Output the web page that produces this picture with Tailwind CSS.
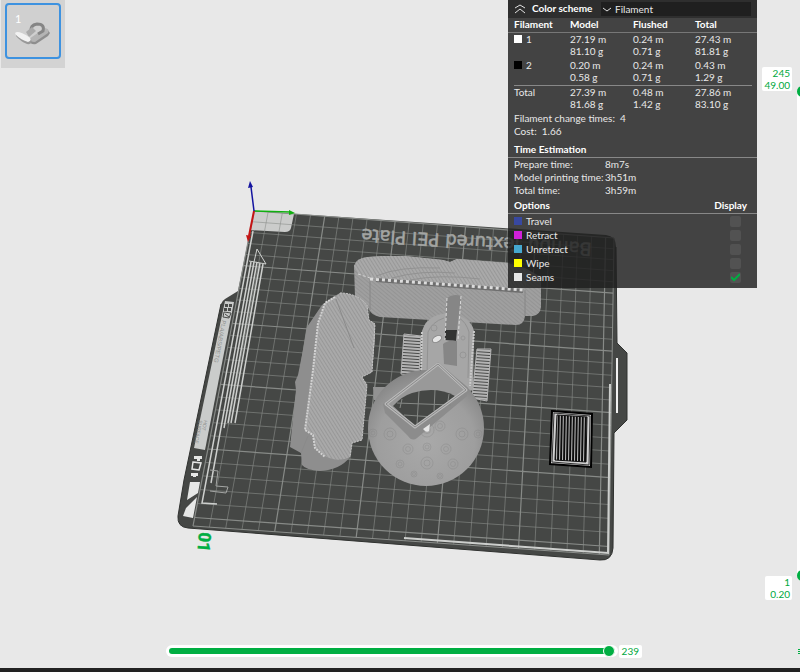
<!DOCTYPE html>
<html lang="en">
<head>
    <meta charset="UTF-8">
    <meta name="viewport" content="width=device-width, initial-scale=1.0">
    <title>Slice Preview</title>
    <script src="https://cdn.jsdelivr.net/npm/@tailwindcss/browser@4"></script>
</head>
<body class="flex min-h-screen flex-col bg-[#e8e8e8] font-['Lato',sans-serif] text-[10px] leading-[13px] text-[#e8e8e8]">
    <main class="relative flex flex-1 flex-col overflow-hidden">

        <!-- 3D scene -->
        <svg class="absolute inset-0 h-full w-full" viewBox="0 0 800 668" preserveAspectRatio="xMidYMid meet" role="img" aria-label="Sliced plate 01">
            <defs>
                <pattern id="layers" width="3" height="3" patternUnits="userSpaceOnUse" patternTransform="rotate(58)">
                    <rect width="3" height="3" fill="#a9a9a9"/>
                    <rect width="3" height="1" fill="#989898"/>
                </pattern>
                <pattern id="wall" width="3" height="3" patternUnits="userSpaceOnUse" patternTransform="rotate(40)">
                    <rect width="3" height="3" fill="#9f9f9f"/>
                    <rect width="3" height="1" fill="#949494"/>
                </pattern>
                <pattern id="support" width="15" height="3" patternUnits="userSpaceOnUse" patternTransform="rotate(4)">
                    <rect width="15" height="3" fill="#4a4b4a"/>
                    <rect width="15" height="2" fill="#b4b4b4"/>
                </pattern>
                <pattern id="tower" width="3" height="60" patternUnits="userSpaceOnUse" patternTransform="rotate(1)">
                    <rect width="3" height="60" fill="#0c0c0c"/>
                    <rect width="1" height="60" fill="#c4c4c4"/>
                </pattern>
                <radialGradient id="ball" cx="0.5" cy="0.62" r="0.6">
                    <stop offset="0" stop-color="#a9a9a9"/>
                    <stop offset="0.7" stop-color="#9e9e9e"/>
                    <stop offset="1" stop-color="#878787"/>
                </radialGradient>
                <clipPath id="ball-clip"><circle cx="426" cy="428" r="58"/></clipPath>
            </defs>

            <!-- plate -->
            <path fill="#454745" d="M254 211 L606 235 Q616 236 616 247 L617 343 L627 353 V420 L614 433 L613 548 Q612 561 600 560 L188 528 Q177 527 178 516 L184 480 L221 304 Q222 301 225 299 L238 291 Z"/>
            <path fill="none" stroke="#303230" d="M616 247 L617 343 L627 353 V420 L614 433 L613 548 Q612 561 600 560 L188 528 Q177 527 178 516 L184 480 L221 304"/>
            <path fill="#cbcccb" d="M254 211 L294 214 L291 228 Q290 232 285 232 L249 230 Z"/>
            <g id="grid" fill="none" stroke="#8b8e8b"></g>
            <text transform="translate(592 243) rotate(183.500)" font-family="DejaVu Sans" font-size="18" fill="#a3a5a3" stroke="#a3a5a3" stroke-width="0.500">Bambu Textured PEI Plate</text>

            <!-- wipe lines and printed marks -->
            <g fill="none" stroke="#cdcfcd" stroke-width="1.500">
                <path d="M253 231 L202 503 L217 504"/>
                <path d="M251 262 L211 483 M254 262 L224 428 M257 262 L228 423 M260 263 L231 423 M263 264 L235 423"/>
                <path d="M257 249 L254 262 M257 249 L266 264 L249 261" stroke-width="1"/>
                <path d="M218 471 L216 486 L228 487 L226 493 L210 491 M210 470 L218 471" stroke="#a4a6a4" stroke-width="1"/>
                <path d="M404 538 L608 553 L610 384" stroke-width="2"/>
                <path d="M617 358 V413" stroke="#f0f0f0" stroke-width="2"/>
            </g>
            <path fill="#cacccb" d="M225 301 L234 302 L205 450 L194 448 Z"/>
            <g fill="#4a4c4a">
                <path d="M225 304h3v3h-3z M229 304h3v3h-3z M224 308h3v3h-3z M228 308h3v3h-3z"/>
                <path fill="none" stroke="#4a4c4a" d="M224 312 L231 313 L229 318 L223 317 Z M225 314 L229 317"/>
            </g>
            <g font-family="Liberation Sans" fill="#8f918f">
                <text transform="translate(222 320) rotate(101)" font-size="6">PLA/ABS/PETG</text>
                <text transform="translate(204 420) rotate(101)" font-size="5">HOT</text>
                <text transform="translate(199 420) rotate(101)" font-size="5">SURFACE</text>
            </g>
            <g fill="#e6e7e6">
                <path d="M190 482 L200 482 L198 493 L187 500 Z M186 508 L197 497 L193 518 L183 516 Z"/>
                <path d="M194 456h8v3h-2v2h-3v-2h-3z M191 473h7v3h-2v1h-3v-1h-2z"/>
                <path fill="none" stroke="#e6e7e6" stroke-width="1.500" d="M193 462 L201 463 L199 470 L192 469 Z"/>
            </g>
            <text transform="translate(199 532) rotate(94)" font-family="Roboto" font-size="17" font-weight="700" fill="#00ae42" stroke="#00ae42" stroke-width="0.500">01</text>

            <!-- axes -->
            <g stroke-width="1.500" fill="none">
                <path stroke="#10b010" d="M254 211 L290 212"/>
                <path stroke="#c41414" stroke-width="2" d="M254 211 L249 236"/>
                <path stroke="#1414a0" d="M254 211 L251 187"/>
            </g>
            <path fill="#10b010" d="M289 210 L295 213 L289 215 Z"/>
            <path fill="#c41414" d="M246 235 L251 236 L248 242 Z"/>
            <path fill="#1414a0" d="M248 188 L250 181 L253 187 Z"/>

            <!-- rear body -->
            <path fill="url(#wall)" d="M354 266 Q356 258 368 257 L383 256 L405 256 L443 260 L450 262 L457 259 L508 263 L525 268 L541 277 L541 307 Q540 315 533 316 L525 316 Q524 325 516 325 L380 317 Q371 315 369 309 L355 297 Z"/>
            <path fill="url(#layers)" d="M354 266 Q356 258 368 257 L383 256 L405 256 L443 260 L450 262 L457 259 L508 263 L525 270 Q530 283 523 290 L373 279 L358 274 Z"/>
            <path fill="none" stroke="#868686" d="M370 280 L370 310 M525 290 V316"/>
            <path fill="none" stroke="#6e6e6e" stroke-width="4" d="M376 280 L523 291"/>
            <path fill="none" stroke="#dcdcdc" stroke-width="3" stroke-dasharray="3 3" d="M370 279 L523 290"/>
            <path fill="none" stroke="#d0d0d0" stroke-dasharray="3 2" d="M358 274 L370 278"/>
            <path fill="none" stroke="#929292" d="M376 276 Q400 266 440 268 M392 278 Q420 270 455 273 M410 280 Q440 274 480 279"/>

            <!-- left body -->
            <path fill="#8e8e8e" d="M340 293 Q357 293 367 305 L369 320 L375 324 L375 337 L372 372 L362 377 L367 385 L362 440 L352 443 L350 457 Q340 470 320 471 Q306 470 302 465 L301 453 L290 447 L296 390 L295 382 L298 375 L303 350 L307 327 L322 305 L333 297 Z"/>
            <path fill="url(#layers)" d="M340 293 Q357 293 367 305 L369 320 L375 324 L375 337 L372 372 L362 377 L367 385 L362 440 L352 443 L350 457 Q338 463 325 456 L315 448 L313 435 L305 430 L313 370 L318 323 L325 303 L335 297 Z"/>
            <path fill="none" stroke="#d2d2d2" stroke-width="2" stroke-dasharray="2 1" d="M335 297 L325 303 L318 323 L313 370 L305 430 L313 435 L315 448 L325 457"/>
            <path fill="none" stroke="#c4c4c4" stroke-dasharray="2 1" d="M340 293 Q357 293 367 305 L369 320 L375 324 L372 372 L362 377 L367 385 L362 440 L352 443 L350 457"/>
            <path fill="none" stroke="#8a8a8a" d="M336 299 L354 348 M301 453 L308 436"/>

            <!-- ring and its supports -->
            <path fill="url(#support)" stroke="#b4b4b4" d="M404 334 L421 336 L419 376 L401 374 Z"/>
            <path fill="url(#support)" stroke="#b4b4b4" d="M477 349 L491 349 L487 401 L472 398 Z"/>
            <path fill="#a6a6a6" d="M421 378 L422 331 Q425 321 433 317 Q449 309 464 318 Q472 322 474 331 L473 390 L440 400 Z"/>
            <path fill="none" stroke="#cacaca" stroke-width="2" stroke-dasharray="2 1" d="M421 376 L422 331 M474 331 L470 386"/>
            <path fill="none" stroke="#929292" d="M427 376 L428 332 Q432 322 444 318 M468 378 L469 332 Q466 322 459 318"/>
            <g fill="none" stroke="#969696">
                <circle cx="434" cy="328" r="3"/><circle cx="463" cy="355" r="3"/><circle cx="463" cy="338" r="2"/>
            </g>
            <path fill="#868686" d="M447 298 Q453 293 461 296 L457 331 L445 331 Z"/>
            <path fill="#323332" d="M445 330 L457 330 L456 341 L445 340 Z"/>
            <path fill="#868686" d="M443 344 Q449 339 457 341 L457 366 L444 364 Z"/>
            <path fill="none" stroke="#dadada" stroke-dasharray="3 2" d="M447 298 L445 340 M461 296 L458 340"/>
            <ellipse cx="437" cy="339" rx="5" ry="3" fill="#e4e4e4" stroke="#888" transform="rotate(-30 437 339)"/>

            <!-- ball with square opening -->
            <path fill="#929292" d="M373 387 L386 387 L380 400 L374 400 Z"/>
            <circle cx="426" cy="428" r="58" fill="url(#ball)"/>
            <g id="rings" clip-path="url(#ball-clip)" fill="none" stroke="#858585" stroke-opacity="0.35"></g>
            <path fill="#8c8c8c" d="M383 404 L438 362 L468 388 L467 396 L417 438 Q412 442 408 436 L385 413 Z"/>
            <path fill="#999" d="M388 404 L438 366 L464 390 L415 426 Z"/>
            <path fill="#454745" d="M393 406 Q402 396 412 393 Q436 386 455 396 L415 426 Z"/>
            <path fill="none" stroke="#858885" d="M397 403 L451 405 M404 415 L434 417 M402 399 L400 408 M419 391 L417 424 M435 390 L434 411 M449 394 L448 401"/>
            <path fill="none" stroke="#b9b9b9" stroke-width="3" stroke-linejoin="round" d="M386 404 L438 364 L466 390 L415 427 Z"/>
            <path fill="none" stroke="#8a8a8a" d="M386 404 L438 364 L466 390 L415 427 Z"/>
            <path fill="#e6e6e6" d="M430 424 L429 431 Q426 433 423 429 Z"/>

            <!-- prime tower -->
            <path fill="#d0d0d0" stroke="#000" stroke-width="2" d="M552 411 L592 414 L591 467 L550 464 Z"/>
            <path fill="none" stroke="#333" d="M554 413 L590 416 L589 465 L552 462 Z"/>
            <path fill="url(#tower)" stroke="#111" d="M557 415 L587 417 L586 462 L555 460 Z"/>
        </svg>

        <div class="relative flex items-start">
            <!-- plate list -->
            <nav class="ml-px bg-[#d3d3d3] p-1 pt-[3px] pb-[9px]" aria-label="Plates">
                <button class="relative block size-14 rounded-sm border-2 border-[#3d92e0] bg-[#d0d0d0] text-white" aria-label="Plate 1">
                    <span class="absolute top-2 left-2 text-[11px] leading-none">1</span>
                    <svg class="h-full w-full" viewBox="0 0 52 52" aria-hidden="true">
                        <path fill="#8e8e8e" d="M22 36 L40 24 L43 28 L41 31 L29 39 Q24 40 22 36Z"/>
                        <path fill="#b4b4b4" d="M22 34 L38 23 Q43 24 41 28 L28 37 Q23 37 22 34Z"/>
                        <path fill="none" stroke="#858585" stroke-width="3" d="M24 27 Q23 20 30 19 Q38 19 36 26 L31 29"/>
                        <path fill="#aaa" d="M19 27 L25 22 L29 26 L22 32 Z"/>
                        <path fill="#999" d="M9 28 Q12 27 24 34 Q26 40 20 39 Q13 36 9 31Z"/>
                        <path fill="#f2f2f2" d="M8 28 Q11 25 22 32 Q26 35 21 37 Q14 35 9 30Z"/>
                    </svg>
                </button>
            </nav>

            <!-- legend -->
            <section class="mr-[43px] ml-auto w-[249px] bg-[#1e1e1e]/82 pb-[4px]">
                <header class="flex h-[18px] items-center bg-[#1e1e1e]/55 pr-[6px] pl-[6px]">
                    <button class="mr-[6px] size-3" aria-label="Collapse legend">
                        <svg viewBox="0 0 12 12" fill="none" stroke="#e2e2e2" aria-hidden="true"><path d="M1 5 L6 2 L11 5 M1 10 L6 6 L11 10"/></svg>
                    </button>
                    <label for="scheme" class="w-[69px] pb-[2px] font-bold text-white">Color scheme</label>
                    <div class="relative flex-1">
                        <select id="scheme" class="block h-[14px] w-full appearance-none bg-[#1f1f1f] pl-[14px] leading-[14px]">
                            <option>Filament</option>
                            <option>Line Type</option>
                            <option>Speed</option>
                        </select>
                        <svg class="pointer-events-none absolute top-[3px] left-[2px] size-2" viewBox="0 0 8 8" fill="none" stroke="#e2e2e2" aria-hidden="true"><path d="M0 3 L4 6 L8 3"/></svg>
                    </div>
                </header>

                <table class="w-full table-fixed text-left leading-[12px]">
                    <thead class="border-b border-[#777] text-white">
                        <tr>
                            <th class="w-[62px] pb-[2px] pl-[6px]">Filament</th>
                            <th class="w-[63px] pb-[2px]">Model</th>
                            <th class="w-[62px] pb-[2px]">Flushed</th>
                            <th class="pb-[2px]">Total</th>
                        </tr>
                    </thead>
                    <tbody>
                        <tr class="align-top">
                            <td class="pl-[6px]"><i class="mr-1 inline-block size-2 bg-white"></i>1</td>
                            <td class="pb-[2px]">27.19 m<br>81.10 g</td>
                            <td>0.24 m<br>0.71 g</td>
                            <td>27.43 m<br>81.81 g</td>
                        </tr>
                        <tr class="align-top">
                            <td class="pl-[6px]"><i class="mr-1 inline-block size-2 bg-black"></i>2</td>
                            <td class="pb-[2px]">0.20 m<br>0.58 g</td>
                            <td>0.24 m<br>0.71 g</td>
                            <td>0.43 m<br>1.29 g</td>
                        </tr>
                    </tbody>
                </table>
                <hr class="mr-[5px] ml-[6px] border-[#888]">
                <dl class="grid grid-cols-[56px_63px_62px_1fr] pb-[2px] pl-[6px] leading-[12px]">
                    <dt>Total</dt>
                    <dd>27.39 m<br>81.68 g</dd>
                    <dd>0.48 m<br>1.42 g</dd>
                    <dd>27.86 m<br>83.10 g</dd>
                </dl>
                <p class="pl-[6px]">Filament change times: &nbsp;4</p>
                <p class="pl-[6px]">Cost: &nbsp;1.66</p>

                <h2 class="mt-[5px] border-b border-[#888] pb-px pl-[6px] font-bold text-white">Time Estimation</h2>
                <dl class="grid grid-cols-[91px_1fr] pl-[6px]">
                    <dt>Prepare time:</dt><dd>8m7s</dd>
                    <dt>Model printing time:</dt><dd>3h51m</dd>
                    <dt>Total time:</dt><dd>3h59m</dd>
                </dl>

                <h2 class="mt-[2px] flex justify-between border-b border-[#888] pb-px pr-[10px] pl-[6px] font-bold text-white"><span>Options</span><span>Display</span></h2>
                <ul class="pr-[16px] pl-[6px] leading-[14px]">
                    <li><label class="flex items-center"><i class="mr-1 size-2 bg-[#3848a0]"></i><span class="flex-1">Travel</span><input type="checkbox" class="size-[11px] appearance-none rounded-xs bg-[#525252]"></label></li>
                    <li><label class="flex items-center"><i class="mr-1 size-2 bg-[#d020d8]"></i><span class="flex-1">Retract</span><input type="checkbox" class="size-[11px] appearance-none rounded-xs bg-[#525252]"></label></li>
                    <li><label class="flex items-center"><i class="mr-1 size-2 bg-[#45a8d0]"></i><span class="flex-1">Unretract</span><input type="checkbox" class="size-[11px] appearance-none rounded-xs bg-[#525252]"></label></li>
                    <li><label class="flex items-center"><i class="mr-1 size-2 bg-[#ffff00]"></i><span class="flex-1">Wipe</span><input type="checkbox" class="size-[11px] appearance-none rounded-xs bg-[#525252]"></label></li>
                    <li><label class="relative flex items-center"><i class="mr-1 size-2 bg-[#e6e6e6]"></i><span class="flex-1">Seams</span><input type="checkbox" checked class="peer size-[11px] appearance-none rounded-xs bg-[#525252]"><svg class="pointer-events-none absolute right-px hidden size-[9px] peer-checked:block" viewBox="0 0 9 9" fill="none" stroke="#00ae42" stroke-width="2" aria-hidden="true"><path d="M0 4 L3 7 L9 1"/></svg></label></li>
                </ul>
            </section>
        </div>

        <!-- move slider -->
        <div class="relative mt-auto mr-[158px] mb-[10px] ml-[169px] flex items-center">
            <input type="range" min="0" max="239" value="239" aria-label="Move" class="h-[14px] flex-1 appearance-none bg-transparent [&::-webkit-slider-runnable-track]:h-[6px] [&::-webkit-slider-runnable-track]:rounded-full [&::-webkit-slider-runnable-track]:bg-[#00ae42] [&::-webkit-slider-runnable-track]:shadow-[0_0_0_3px_white] [&::-webkit-slider-thumb]:-mt-[3px] [&::-webkit-slider-thumb]:size-3 [&::-webkit-slider-thumb]:appearance-none [&::-webkit-slider-thumb]:rounded-full [&::-webkit-slider-thumb]:border [&::-webkit-slider-thumb]:border-white [&::-webkit-slider-thumb]:bg-[#00ae42]">
            <output class="ml-1 rounded-xs bg-white px-[3px] text-[#00a840]">239</output>
        </div>

        <!-- layer slider, its track runs off the right edge -->
        <div class="absolute top-[67px] right-0 bottom-[68px] flex w-[43px] flex-col items-end justify-between text-right leading-[12px] text-[#00a840]">
            <div class="absolute top-[24px] -right-[2px] bottom-[24px] w-[5px] bg-white"></div>
            <output class="mr-2 rounded-xs bg-white px-[2px]">245<br>49.00</output>
            <button class="absolute top-[19px] -right-[8px] size-[11px] rounded-full bg-[#00ae42]" aria-label="Top layer"></button>
            <output class="mr-2 rounded-xs bg-white pr-[2px] pl-[5px]">1<br>0.20</output>
            <button class="absolute bottom-[19px] -right-[8px] size-[11px] rounded-full bg-[#00ae42]" aria-label="Bottom layer"></button>
        </div>
        <div class="absolute right-0 bottom-[14px] flex w-[2px] flex-col gap-px">
            <i class="h-px bg-[#00ae42]"></i><i class="h-px bg-[#00ae42]"></i><i class="h-px bg-[#00ae42]"></i>
        </div>
    </main>
    <footer class="h-1 bg-[#222]"></footer>

    <script>
        // bed corners on screen: back left, back right, front right, front left
        const bed = [[254, 211], [614, 238], [609, 555], [193, 526]];
        const cells = 25.6;

        // unit square -> bed quad
        const [p0, p1, p2, p3] = bed;
        const dx1 = p1[0] - p2[0], dx2 = p3[0] - p2[0], sx = p0[0] - p1[0] + p2[0] - p3[0];
        const dy1 = p1[1] - p2[1], dy2 = p3[1] - p2[1], sy = p0[1] - p1[1] + p2[1] - p3[1];
        const det = dx1 * dy2 - dx2 * dy1;
        const g = (sx * dy2 - dx2 * sy) / det;
        const h = (dx1 * sy - sx * dy1) / det;

        function project(u, v) {
            const w = g * u + h * v + 1;
            const x = (p1[0] - p0[0] + g * p1[0]) * u + (p3[0] - p0[0] + h * p3[0]) * v + p0[0];
            const y = (p1[1] - p0[1] + g * p1[1]) * u + (p3[1] - p0[1] + h * p3[1]) * v + p0[1];
            return (x / w).toFixed(1) + ' ' + (y / w).toFixed(1);
        }

        let lines = '';
        for (let i = 0; i <= 25; i++) {
            const t = i / cells;
            const style = i % 5 === 0 ? 'stroke-opacity="0.95" stroke-width="1.2"' : 'stroke-opacity="0.75" stroke-width="0.8"';
            lines += `<path ${style} d="M${project(t, 0)} L${project(t, 1)} M${project(0, t)} L${project(1, t)}"/>`;
        }
        lines += `<path d="M${project(0, 1)} L${project(1, 1)} L${project(1, 0)}"/>`;
        document.getElementById('grid').innerHTML = lines;

        // moire rings on the ball
        const spots = [[390, 434, 6], [462, 434, 6], [427, 430, 7], [440, 426, 5], [408, 449, 5], [446, 449, 5], [427, 463, 6], [453, 464, 5], [400, 464, 4], [427, 447, 4], [373, 433, 4], [478, 434, 4], [414, 474, 3], [440, 476, 3]];
        document.getElementById('rings').innerHTML = spots.map(([x, y, r]) =>
            `<circle cx="${x}" cy="${y}" r="${r}"/><circle cx="${x}" cy="${y}" r="${r / 2}"/>`).join('');
    </script>
</body>
</html>
